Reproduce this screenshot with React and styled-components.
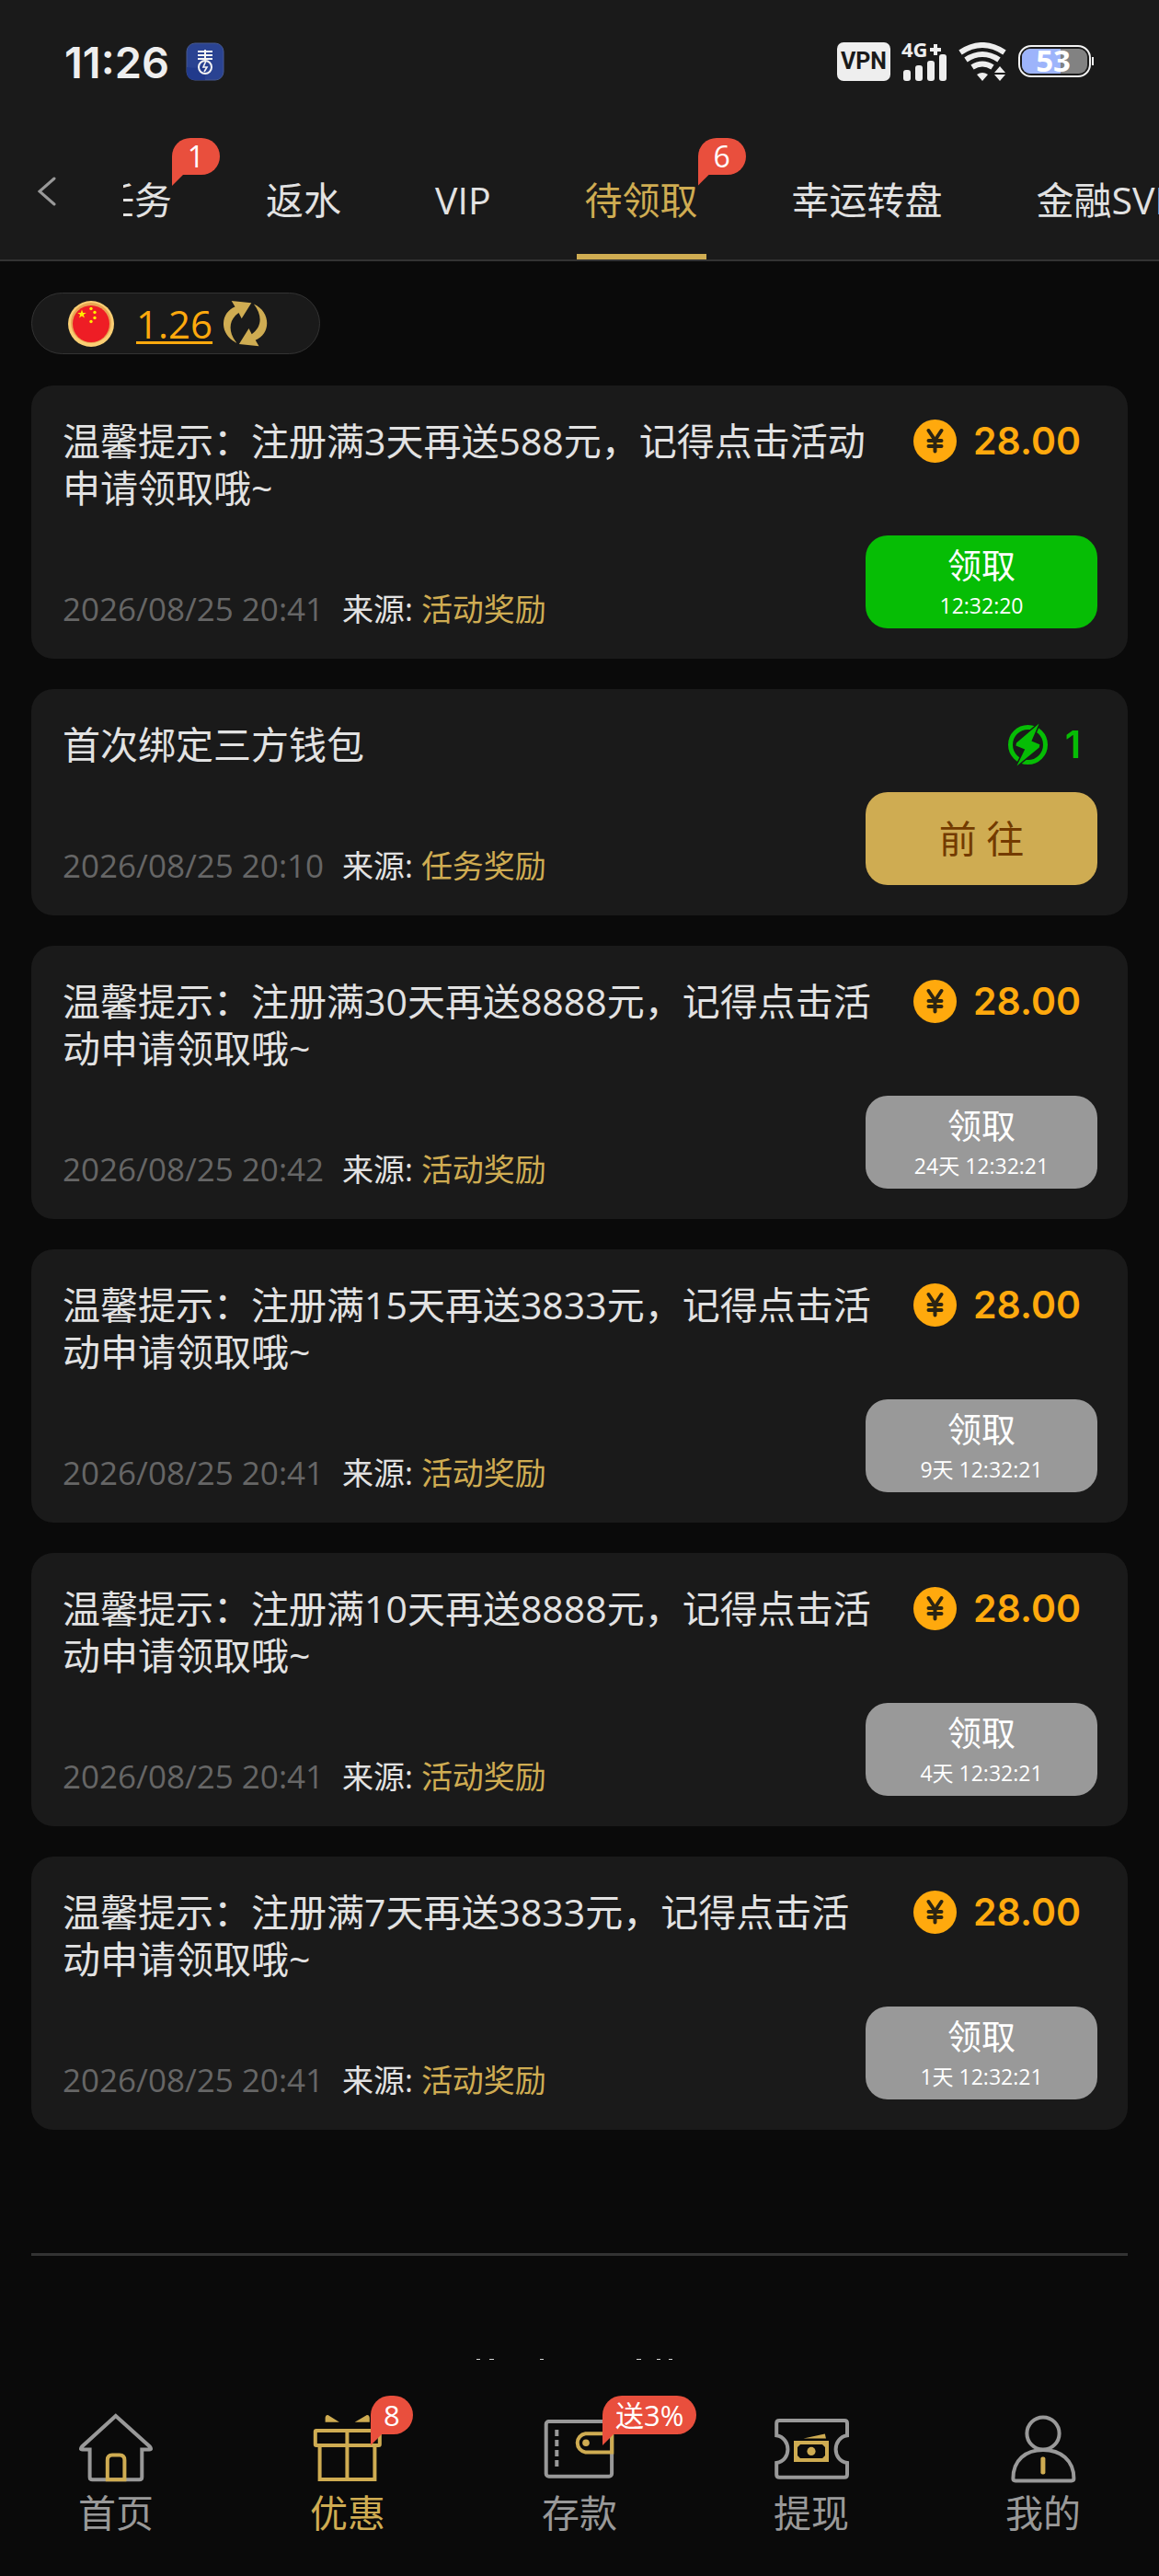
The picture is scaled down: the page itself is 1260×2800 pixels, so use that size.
import React from "react";
import styled, { createGlobalStyle } from "styled-components";

const tabs = [
  { label: "任务", badge: "1" },
  { label: "返水" },
  { label: "VIP" },
  { label: "待领取", badge: "6", active: true },
  { label: "幸运转盘" },
  { label: "金融SVIP" },
];

const rewards = [
  {
    title: "温馨提示：注册满3天再送588元，记得点击活动申请领取哦~",
    time: "2026/08/25 20:41",
    source: "活动奖励",
    amount: "28.00",
    kind: "coin",
    status: "ready",
    countdown: "12:32:20",
  },
  {
    title: "首次绑定三方钱包",
    time: "2026/08/25 20:10",
    source: "任务奖励",
    amount: "1",
    kind: "energy",
    status: "go",
  },
  {
    title: "温馨提示：注册满30天再送8888元，记得点击活动申请领取哦~",
    time: "2026/08/25 20:42",
    source: "活动奖励",
    amount: "28.00",
    kind: "coin",
    status: "waiting",
    countdown: "24天 12:32:21",
  },
  {
    title: "温馨提示：注册满15天再送3833元，记得点击活动申请领取哦~",
    time: "2026/08/25 20:41",
    source: "活动奖励",
    amount: "28.00",
    kind: "coin",
    status: "waiting",
    countdown: "9天 12:32:21",
  },
  {
    title: "温馨提示：注册满10天再送8888元，记得点击活动申请领取哦~",
    time: "2026/08/25 20:41",
    source: "活动奖励",
    amount: "28.00",
    kind: "coin",
    status: "waiting",
    countdown: "4天 12:32:21",
  },
  {
    title: "温馨提示：注册满7天再送3833元，记得点击活动申请领取哦~",
    time: "2026/08/25 20:41",
    source: "活动奖励",
    amount: "28.00",
    kind: "coin",
    status: "waiting",
    countdown: "1天 12:32:21",
  },
];

function StatusIcons() {
  return (
    <StatusGroup>
      <VpnTag>VPN</VpnTag>
      <svg width="50" height="42" viewBox="0 0 50 42" fill="#eeeeee" overflow="visible">
        <text x="0" y="16" fontSize="22" fontWeight="700" fontFamily="Open Sans">
          4G
        </text>
        <path d="M31 6h4v-4h4v4h4v4h-4v4h-4v-4h-4z" />
        <rect x="2" y="30" width="8" height="12" rx="3" />
        <rect x="15" y="25" width="8" height="17" rx="3" />
        <rect x="28" y="20" width="8" height="22" rx="3" />
        <rect x="41" y="13" width="8" height="29" rx="3" />
      </svg>
      <svg width="52" height="42" viewBox="0 0 52 42">
        <g fill="none" stroke="#eeeeee" strokeWidth="6">
          <path d="M2 11Q26 -5 50 11" />
          <path d="M8 19Q26 7 44 19" />
          <path d="M15 27Q26 20 37 27" />
        </g>
        <path d="M20 35Q26 31 32 35L26 42z" fill="#eeeeee" />
        <path d="M45 26l6 7H39zM45 42l6-7H39z" fill="#eeeeee" />
      </svg>
      <svg width="84" height="36" viewBox="0 0 84 36" overflow="visible">
        <rect x="5" y="4" width="71" height="27" rx="9" fill="#828282" />
        <path d="M14 4H47V31H14A9 9 0 0 1 5 22V13A9 9 0 0 1 14 4z" fill="#9db4fb" />
        <rect x="2" y="1" width="77" height="33" rx="13" fill="none" stroke="#f2f2f2" strokeWidth="2" />
        <rect x="81" y="13" width="2" height="9" fill="#f2f2f2" />
        <text
          x="39"
          y="29"
          textAnchor="middle"
          fontSize="33"
          fontWeight="700"
          fontFamily="Open Sans"
          fill="#ffffff"
        >
          53
        </text>
      </svg>
    </StatusGroup>
  );
}

function AppBadge() {
  return (
    <svg width="42" height="42" viewBox="0 0 42 42" fill="none">
      <rect x="1" y="1" width="40" height="40" rx="9" fill="#2a4392" stroke="#46598f" />
      <path d="M1 27Q12 29 21 26V41H10Q1 41 1 32z" fill="#213a8c" />
      <path d="M13 10h16M13 14h16M13 18h16M21 8v10" stroke="#f4f4f4" strokeWidth="2" />
      <ellipse cx="21" cy="27" rx="7" ry="7" stroke="#f4f4f4" strokeWidth="2" />
      <path d="M22 20l-3 7h4l-3 5" stroke="#f4f4f4" strokeWidth="1.6" />
    </svg>
  );
}

function FlagIcon() {
  const star = "M0 -5L1.2 -1.6L4.8 -1.5L1.9 .6L2.9 4L0 2L-2.9 4L-1.9 .6L-4.8 -1.5L-1.2 -1.6z";
  return (
    <svg width="50" height="50" viewBox="0 0 50 50">
      <circle cx="25" cy="25" r="25" fill="#fbcf74" />
      <circle cx="25" cy="24" r="22" fill="#e8a552" />
      <circle cx="25" cy="25" r="20" fill="#ee1d25" />
      <g fill="#ffee00">
        <path d={star} transform="translate(15 14.5)" />
        <circle cx="25" cy="8.5" r="1.7" />
        <circle cx="29" cy="12.5" r="1.7" />
        <circle cx="29" cy="18.5" r="1.7" />
        <circle cx="25" cy="22.5" r="1.7" />
      </g>
    </svg>
  );
}

function RefreshIcon() {
  const arrow =
    "M8.7 0L30.3 2.3L19.7 19.3L16.5 13C5 21 5 34 14.3 45.7C-5 37 -4 13 12.5 6.5z";
  return (
    <svg width="48" height="50" viewBox="0 0 48 50" fill="#cfac52">
      <path d={arrow} />
      <path d={arrow} transform="rotate(180 23.6 24.6)" />
    </svg>
  );
}

function CoinIcon() {
  return (
    <svg width="47" height="47" viewBox="0 0 47 47">
      <circle cx="23.5" cy="23.5" r="23.5" fill="#ffa90d" />
      <path
        d="M16.5 12L23.5 22.5L30.5 12M23.5 22.5V34.5M16.5 23H30.5M16.5 29H30.5"
        fill="none"
        stroke="#2b2413"
        strokeWidth="4"
        strokeLinecap="round"
      />
    </svg>
  );
}

function EnergyIcon() {
  return (
    <svg width="44" height="47" viewBox="0 0 44 47">
      <circle cx="21.5" cy="23.5" r="19" fill="none" stroke="#06bd05" strokeWidth="5" />
      <path
        d="M33.6 .6L25.4 19.4L34.4 23.2L33.8 26.4L9.4 46.4L18.2 28.6L8.4 24.4L9 21.6z"
        fill="#06bd05"
        stroke="#1a1a1a"
        strokeWidth="3"
        paintOrder="stroke"
      />
    </svg>
  );
}

function HomeIcon() {
  return (
    <NavSvg>
      <path d="M13.6 44.5H5.5Q2.5 44.5 5 41.5L41.8 8L79 41.5Q81.5 44.5 78.5 44.5H70.3V74.5Q70.3 77.3 67.5 77.3H16.5Q13.6 77.3 13.6 74.5z" />
      <path className="gold" d="M32.8 77.3V56Q32.8 50.5 38 50.5H46Q51.4 50.5 51.4 56V77.3z" />
    </NavSvg>
  );
}

function GiftIcon() {
  return (
    <NavSvg>
      <g className="gold">
        <rect x="6.8" y="24" width="70" height="16" rx="1" />
        <path d="M11.6 40V77H71.4V40M41.4 24V77" />
      </g>
      <path className="fill" d="M17.6 14.7V10Q18 6.7 20.5 7L32.9 14.7zM65.8 14.7V10Q65.4 6.7 62.9 7L49.7 14.7z" />
    </NavSvg>
  );
}

function WalletIcon() {
  return (
    <NavSvg>
      <rect x="5.7" y="14" width="71.4" height="59.7" rx="3" />
      <path d="M17.3 23V64" strokeDasharray="7 4" />
      <path className="gold" d="M77.3 27.2H48.5A10.2 10.2 0 0 0 48.5 47.4H77.3z" />
      <circle className="fill" cx="49" cy="37.3" r="3.8" />
    </NavSvg>
  );
}

function WithdrawIcon() {
  return (
    <NavSvg>
      <path d="M4.2 29.3V16Q4.2 13 7.2 13H78Q81 13 81 16V29.3C64.5 32 64.5 56.5 81 59V71.7Q81 74.7 78 74.7H7.2Q4.2 74.7 4.2 71.7V59C20.5 56.5 20.5 32 4.2 29.3z" />
      <path className="fill" d="M33.5 32.5L56.8 27.5L58 32.5z" />
      <rect className="gold" x="25" y="37" width="34" height="19" />
      <path className="fill" d="M26 38h5l-5 5zM58 38h-5l5 5zM26 55h5l-5 -5zM58 55h-5l5 -5z" />
      <circle className="fill" cx="42" cy="46.4" r="4.6" />
    </NavSvg>
  );
}

function UserIcon() {
  return (
    <NavSvg>
      <circle cx="42" cy="27" r="17.6" />
      <path d="M9.4 76C9.4 56 23 45 42 45S75.4 56 75.4 76Q75.4 78.4 73 78.4H11.8Q9.4 78.4 9.4 76z" />
      <rect className="fill" x="39.4" y="52.6" width="5" height="19" rx="2" />
    </NavSvg>
  );
}

const navItems = [
  { label: "首页", Icon: HomeIcon },
  { label: "优惠", Icon: GiftIcon, badge: "8", active: true },
  { label: "存款", Icon: WalletIcon, badge: "送3%" },
  { label: "提现", Icon: WithdrawIcon },
  { label: "我的", Icon: UserIcon },
];

function RewardCard({ reward }) {
  return (
    <Card>
      <CardTop>
        <CardTitle>{reward.title}</CardTitle>
        <Amount $kind={reward.kind}>
          {reward.kind === "coin" ? <CoinIcon /> : <EnergyIcon />}
          {reward.amount}
        </Amount>
      </CardTop>
      <CardBottom>
        <Meta>
          <Time>{reward.time}</Time>
          <span>
            来源: <Source>{reward.source}</Source>
          </span>
        </Meta>
        <ActionButton type="button" $status={reward.status}>
          {reward.status === "go" ? (
            <GoLabel>前 往</GoLabel>
          ) : (
            <>
              <ClaimLabel>领取</ClaimLabel>
              <Countdown>{reward.countdown}</Countdown>
            </>
          )}
        </ActionButton>
      </CardBottom>
    </Card>
  );
}

function App() {
  return (
    <Page>
      <GlobalStyle />
      <Header>
        <StatusBar>
          <Clock>
            11:26
            <AppBadge />
          </Clock>
          <StatusIcons />
        </StatusBar>
        <TabBar>
          <BackButton type="button" aria-label="返回">
            <svg width="20" height="32" viewBox="0 0 20 32" fill="none">
              <path d="M18 2L2 16L18 30" stroke="#999999" strokeWidth="3" strokeLinecap="round" />
            </svg>
          </BackButton>
          <TabScroller>
            <TabList>
              {tabs.map((tab) => (
                <Tab key={tab.label} type="button" $active={tab.active}>
                  <TabLabel>
                    {tab.label}
                    {tab.badge && <TabBadge>{tab.badge}</TabBadge>}
                  </TabLabel>
                </Tab>
              ))}
            </TabList>
          </TabScroller>
        </TabBar>
      </Header>

      <Main>
        <Balance>
          <FlagIcon />
          <BalanceLink href="#balance">1.26</BalanceLink>
          <RefreshButton type="button" aria-label="刷新">
            <RefreshIcon />
          </RefreshButton>
        </Balance>
        <CardList>
          {rewards.map((reward) => (
            <RewardCard key={reward.title} reward={reward} />
          ))}
        </CardList>
        <Divider />
        <FooterPeek>
          <svg width="224" height="1" viewBox="0 0 224 1" fill="#d8d8d8">
            <path d="M0 0h4v1h-4zM14 0h5v1h-5zM69 0h4v1h-4zM174 0h5v1h-5zM196 0h4v1h-4zM209 0h4v1h-4z" />
          </svg>
        </FooterPeek>
      </Main>

      <BottomNav>
        {navItems.map(({ label, Icon, badge, active }) => (
          <NavItem key={label} href="#nav" $active={active}>
            <NavIcon>
              <Icon />
              {badge && <NavBadge>{badge}</NavBadge>}
            </NavIcon>
            {label}
          </NavItem>
        ))}
      </BottomNav>
    </Page>
  );
}

export default App;

const GlobalStyle = createGlobalStyle`
  * {
    box-sizing: border-box;
  }

  body {
    margin: 0;
    background: #0a0a0a;
    color: #e2e2e2;
    font-family: "Open Sans", "Noto Sans CJK SC", sans-serif;
    font-size: 41px;
    line-height: 51px;
  }

  button {
    margin: 0;
    padding: 0;
    border: none;
    background: none;
    color: inherit;
    font: inherit;
    cursor: pointer;
  }

  svg {
    display: block;
    flex: none;
  }
`;

const Page = styled.div`
  display: flex;
  flex-direction: column;
  min-height: 100vh;
`;

const Header = styled.header`
  background: #1a1a1a;
  border-bottom: 2px solid #333333;
`;

const StatusBar = styled.div`
  display: flex;
  justify-content: space-between;
  align-items: center;
  height: 134px;
  padding: 0 70px;
`;

const Clock = styled.div`
  display: flex;
  align-items: center;
  gap: 18px;
  color: #eeeeee;
  font-family: Inter, sans-serif;
  font-weight: 600;
  font-size: 47px;
`;

const StatusGroup = styled.div`
  display: flex;
  align-items: center;
  gap: 12px;
`;

const VpnTag = styled.span`
  padding: 0 4px;
  border-radius: 7px;
  background: #eeeeee;
  color: #1a1a1a;
  font-family: Roboto, sans-serif;
  font-weight: 700;
  font-size: 25px;
  line-height: 42px;
`;

const TabBar = styled.div`
  display: flex;
  height: 148px;
`;

const BackButton = styled.button`
  display: flex;
  flex: none;
  align-items: center;
  width: 134px;
  padding-left: 41px;
`;

const TabScroller = styled.nav`
  flex: 1;
  min-width: 0;
  overflow: hidden;
`;

/* scrolled so that the active tab sits near the middle */
const TabList = styled.div`
  display: flex;
  gap: 84px;
  height: 100%;
  margin-left: -38px;
`;

const Tab = styled.button`
  display: flex;
  flex: none;
  align-items: flex-start;
  padding: 58px 9px 0;
  border-bottom: 6px solid ${({ $active }) => ($active ? "#cfac52" : "transparent")};
  color: ${({ $active }) => ($active ? "#cfac52" : "#e2e2e2")};
  white-space: nowrap;
`;

const TabLabel = styled.span`
  position: relative;
`;

const Badge = styled.span`
  position: absolute;
  border-radius: 21px 21px 21px 0;
  background: #e94f3d;
  color: #ffffff;
  text-align: center;
  white-space: nowrap;

  &::after {
    content: "";
    position: absolute;
    top: 100%;
    left: 0;
    width: 12px;
    height: 12px;
    background: inherit;
    clip-path: polygon(0 0, 100% 0, 0 100%);
  }
`;

const TabBadge = styled(Badge)`
  top: -42px;
  left: 100%;
  width: 52px;
  font-size: 32px;
  line-height: 40px;
`;

const NavBadge = styled(Badge)`
  top: -14px;
  left: 67px;
  padding: 0 14px;
  font-size: 31px;
  line-height: 42px;
`;

const Main = styled.main`
  flex: 1;
  padding: 34px 34px 0;
`;

const Balance = styled.div`
  display: flex;
  align-items: center;
  width: fit-content;
  height: 67px;
  margin-bottom: 34px;
  padding: 0 56px 0 39px;
  border: 1px solid #333333;
  border-radius: 34px;
  background: #1a1a1a;
`;

const BalanceLink = styled.a`
  margin: 0 12px 0 24px;
  color: #ffa90d;
  font-size: 42px;
  text-decoration-thickness: 3px;
  text-underline-offset: 3px;
`;

const RefreshButton = styled.button`
  display: flex;
`;

const CardList = styled.div`
  display: flex;
  flex-direction: column;
  gap: 33px;
`;

const Card = styled.article`
  display: flex;
  flex-direction: column;
  gap: 26px;
  padding: 35px 33px 33px 34px;
  border-radius: 24px;
  background: #1a1a1a;
`;

const CardTop = styled.div`
  display: flex;
  align-items: flex-start;
`;

const CardTitle = styled.h2`
  flex: 1;
  margin: 0;
  font-weight: 400;
  font-size: 41px;
`;

const Amount = styled.div`
  display: flex;
  flex: none;
  justify-content: flex-end;
  align-items: center;
  gap: 18px;
  width: 236px;
  padding-right: 18px;
  color: ${({ $kind }) => ($kind === "coin" ? "#ffa90d" : "#06bd05")};
  font-family: Inter, sans-serif;
  font-weight: 600;
`;

const CardBottom = styled.div`
  display: flex;
  justify-content: space-between;
  align-items: flex-end;
`;

const Meta = styled.div`
  display: flex;
  gap: 20px;
  font-size: 34px;
  line-height: 42px;
`;

const Time = styled.time`
  color: #666666;
  font-size: 35px;
`;

const Source = styled.span`
  color: #cfac52;
`;

const buttonColors = {
  ready: "#06bd05",
  go: "#cfac52",
  waiting: "#999999",
};

const ActionButton = styled.button`
  display: flex;
  flex-direction: column;
  justify-content: center;
  align-items: center;
  width: 252px;
  height: 101px;
  border-radius: 24px;
  background: ${({ $status }) => buttonColors[$status]};
  color: ${({ $status }) => ($status === "go" ? "#733b00" : "#ffffff")};
`;

const GoLabel = styled.span`
  font-size: 41px;
`;

const ClaimLabel = styled.span`
  font-size: 37px;
  line-height: 50px;
`;

const Countdown = styled.span`
  font-size: 23px;
  line-height: 36px;
`;

const Divider = styled.hr`
  height: 3px;
  margin: 134px 0 112px;
  border: none;
  background: #333333;
`;

const FooterPeek = styled.div`
  display: flex;
  justify-content: center;
`;

const BottomNav = styled.nav`
  position: sticky;
  bottom: 0;
  display: flex;
  padding: 53px 0 43px;
  background: #0a0a0a;
`;

const NavItem = styled.a`
  display: flex;
  flex: 1;
  flex-direction: column;
  align-items: center;
  gap: 4px;
  color: ${({ $active }) => ($active ? "#cfac52" : "#999999")};
  text-decoration: none;
`;

const NavIcon = styled.span`
  position: relative;
`;

const NavSvg = styled.svg.attrs({ width: 84, height: 84, viewBox: "0 0 84 84" })`
  fill: none;
  stroke: #999999;
  stroke-width: 4;

  .gold {
    stroke: #cfac52;
  }

  .fill {
    fill: #cfac52;
    stroke: none;
  }
`;
